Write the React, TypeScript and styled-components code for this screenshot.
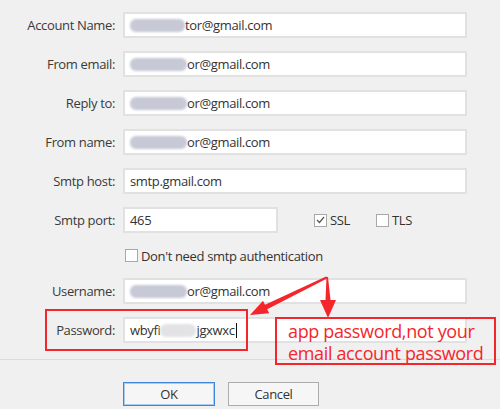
import React from "react";
import styled, { createGlobalStyle } from "styled-components";

const GlobalStyle = createGlobalStyle`
  html, body { margin: 0; padding: 0; background: #f0f0f0; }
  body { font-family: "Open Sans", "Noto Sans", Arial, sans-serif; }
`;

const Page = styled.div`
  position: relative;
  width: 500px;
  height: 409px;
  overflow: hidden;
  box-sizing: border-box;
  padding-top: 12px;
  background: #f0f0f0;
  color: #333;
  font-size: 13px;
  letter-spacing: -0.35px;
`;

const Form = styled.div`
  display: flex;
  flex-direction: column;
  gap: 13px;
`;

const FieldRow = styled.div`
  display: grid;
  grid-template-columns: 115px auto auto auto;
  justify-content: start;
  column-gap: 8px;
  align-items: center;
  height: 26px;
`;

const Label = styled.label`
  text-align: right;
  color: #3a3a3a;
  white-space: nowrap;
`;

const TextBox = styled.div<{ $w: number }>`
  box-sizing: border-box;
  width: ${(p) => p.$w}px;
  height: 26px;
  background: #fff;
  border: 2px solid #e1e1e1;
  padding-left: 5px;
  display: flex;
  align-items: center;
  white-space: nowrap;
  overflow: hidden;
  color: #333;
`;

const Blur = styled.span<{ $w: number; $light?: boolean }>`
  display: inline-block;
  width: ${(p) => p.$w}px;
  height: 13px;
  border-radius: 6px;
  background: ${(p) => (p.$light ? "#e3e3e6" : "#c7cad6")};
  filter: blur(1.2px);
  flex-shrink: 0;
`;

const Caret = styled.span`
  display: inline-block;
  width: 1px;
  height: 15px;
  background: #111;
  margin-left: 1px;
`;

const Options = styled.div`
  display: flex;
  align-items: center;
  gap: 26px;
  margin-left: 28px;
`;

const Check = styled.span`
  display: inline-flex;
  align-items: center;
  gap: 3px;
  color: #333;
`;

const Box = styled.span`
  box-sizing: border-box;
  width: 13px;
  height: 13px;
  border: 1px solid #a8a8a8;
  background: #fff;
  display: inline-flex;
  align-items: center;
  justify-content: center;
`;

const CheckRow = styled.div`
  height: 19px;
  padding-left: 125px;
  display: flex;
  align-items: center;
`;

const Divider = styled.div`
  height: 1px;
  background: #dcdcdc;
  margin-top: 16px;
`;

const Buttons = styled.div`
  display: flex;
  gap: 13px;
  padding-left: 123px;
  margin-top: 22px;
`;

const Button = styled.button<{ $w: number; $primary?: boolean }>`
  box-sizing: border-box;
  width: ${(p) => p.$w}px;
  height: 24px;
  font-family: inherit;
  font-size: 13px;
  letter-spacing: -0.35px;
  color: #333;
  background: #f6f6f6;
  border: 1px solid ${(p) => (p.$primary ? "#3f86d8" : "#acacac")};
  box-shadow: ${(p) => (p.$primary ? "inset 0 0 0 1px #a9cbef" : "none")};
  padding: 0;
`;

const Highlight = styled.div`
  position: absolute;
  left: 45px;
  top: 309px;
  width: 203px;
  height: 42px;
  box-sizing: border-box;
  border: 2px solid #f3272b;
  pointer-events: none;
`;

const Note = styled.div`
  position: absolute;
  left: 275px;
  top: 317px;
  width: 221px;
  height: 48px;
  box-sizing: border-box;
  border: 2px solid #f3272b;
  padding: 1px 0 0 11px;
  color: #f3272b;
  font-size: 18px;
  letter-spacing: -0.35px;
  line-height: 22px;
  white-space: nowrap;
`;

const ArrowLayer = styled.svg`
  position: absolute;
  left: 0;
  top: 0;
  pointer-events: none;
`;

const CheckIcon = () => (
  <svg width="9" height="8" viewBox="0 0 9 8">
    <path d="M1 4 L3.5 6.5 L8 1" fill="none" stroke="#555" strokeWidth="1.2" />
  </svg>
);

type Field = { label: string; prefix?: number; text: string };

const topFields: Field[] = [
  { label: "Account Name:", prefix: 55, text: "tor@gmail.com" },
  { label: "From email:", prefix: 57, text: "or@gmail.com" },
  { label: "Reply to:", prefix: 57, text: "or@gmail.com" },
  { label: "From name:", prefix: 57, text: "or@gmail.com" },
  { label: "Smtp host:", text: "smtp.gmail.com" },
];

export default function App() {
  return (
    <>
      <GlobalStyle />
      <Page>
        <Form>
          {topFields.map((f) => (
            <FieldRow key={f.label}>
              <Label>{f.label}</Label>
              <TextBox $w={344}>
                {f.prefix ? <Blur $w={f.prefix} /> : null}
                <span>{f.text}</span>
              </TextBox>
            </FieldRow>
          ))}
          <FieldRow>
            <Label>Smtp port:</Label>
            <TextBox $w={155}>465</TextBox>
            <Options>
              <Check>
                <Box>
                  <CheckIcon />
                </Box>
                SSL
              </Check>
              <Check>
                <Box />
                TLS
              </Check>
            </Options>
          </FieldRow>
          <CheckRow>
            <Check>
              <Box />
              Don't need smtp authentication
            </Check>
          </CheckRow>
          <FieldRow>
            <Label>Username:</Label>
            <TextBox $w={344}>
              <Blur $w={57} />
              <span>or@gmail.com</span>
            </TextBox>
          </FieldRow>
          <FieldRow>
            <Label>Password:</Label>
            <TextBox $w={344}>
              <span>wbyfi</span>
              <Blur $w={36} $light />
              <span>jgxwxc</span>
              <Caret />
            </TextBox>
          </FieldRow>
        </Form>
        <Divider />
        <Buttons>
          <Button $w={92} $primary>
            OK
          </Button>
          <Button $w={91}>Cancel</Button>
        </Buttons>

        <Highlight />
        <Note>
          app password,not your
          <br />
          email account password
        </Note>
        <ArrowLayer width="500" height="409" viewBox="0 0 500 409">
          <polygon
            fill="#f3272b"
            points="326,276.5 328,278 267.2,309.2 269.2,313.3 250,315 263,300.7 265,304.8"
          />
          <polygon
            fill="#f3272b"
            points="326.5,277 328,277 330.5,300 336,300 328,318 320,300 325.5,300"
          />
        </ArrowLayer>
      </Page>
    </>
  );
}
